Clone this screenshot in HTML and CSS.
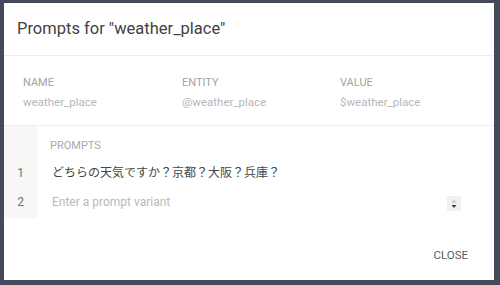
FILE: index.html
```html
<!DOCTYPE html>
<html lang="ja">
<head>
<meta charset="utf-8">
<link rel="stylesheet" href="styles.css">
</head>
<body>
<div class="dialog">
  <div class="header">Prompts for "weather_place"</div>
  <div class="info">
    <div class="col">
      <div class="label">Name</div>
      <div class="value">weather_place</div>
    </div>
    <div class="col">
      <div class="label">Entity</div>
      <div class="value">@weather_place</div>
    </div>
    <div class="col">
      <div class="label">Value</div>
      <div class="value">$weather_place</div>
    </div>
  </div>
  <div class="prompts">
    <div class="row head">
      <div class="num"></div>
      <div class="cell"><span class="plabel">Prompts</span></div>
    </div>
    <div class="row first">
      <div class="num">1</div>
      <div class="cell"><span class="text">どちらの天気ですか？京都？大阪？兵庫？</span></div>
    </div>
    <div class="row last">
      <div class="num">2</div>
      <div class="cell">
        <span class="text placeholder">Enter a prompt variant</span>
        <span class="spinner">
          <svg width="14" height="15" viewBox="0 0 14 15">
            <rect width="14" height="15" fill="#f1f1f1"/>
            <path d="M4.5 6.5 L7 3.5 L9.5 6.5 Z" fill="#c4c4c4"/>
            <path d="M4.5 9 L7 12 L9.5 9 Z" fill="#3a3a3a"/>
          </svg>
        </span>
      </div>
    </div>
  </div>
  <div class="footer">
    <span class="close">Close</span>
  </div>
</div>
</body>
</html>
```
FILE: styles.css
```css
html, body {
  margin: 0;
  padding: 0;
}
body {
  background: #454a5b;
  width: 500px;
  height: 285px;
  overflow: hidden;
  font-family: Roboto, "Noto Sans CJK JP", sans-serif;
}
.dialog {
  margin: 3px 0 0 4px;
  width: 490px;
  height: 277px;
  background: #ffffff;
  display: flex;
  flex-direction: column;
}
.header {
  height: 38px;
  padding: 14px 0 0 13px;
  font-size: 16.5px;
  line-height: 24px;
  color: #424242;
  border-bottom: 1px solid #ececec;
}
.info {
  display: grid;
  grid-template-columns: 159px 158px 1fr;
  padding: 19px 0 15px 19px;
  border-bottom: 1px solid #ececec;
}
.label {
  font-size: 11px;
  line-height: 16px;
  text-transform: uppercase;
  color: #a2a2a6;
}
.value {
  margin-top: 3px;
  font-size: 11.5px;
  line-height: 16px;
  color: #b7b7bb;
}
.prompts {
  display: flex;
  flex-direction: column;
}
.row {
  display: flex;
  height: 28px;
}
.row.head {
  height: 33px;
}
.row.first {
  height: 29px;
}
.row.last {
  height: 30px;
}
.num {
  width: 33px;
  flex: none;
  background: #f7f7f7;
  text-align: center;
  font-size: 12px;
  line-height: 28px;
  color: #707070;
}
.cell {
  flex: 1;
  display: flex;
  align-items: flex-start;
  padding-left: 13px;
  padding-right: 33px;
}
.plabel {
  margin-top: 12px;
  font-size: 11px;
  line-height: 16px;
  text-transform: uppercase;
  color: #a6a8ba;
}
.text {
  flex: 1;
  padding-left: 2px;
  font-size: 12px;
  line-height: 28px;
  color: #454545;
}
.placeholder {
  color: #b9b9b9;
}
.spinner {
  display: block;
  margin-top: 8px;
  width: 14px;
  height: 15px;
}
.spinner svg {
  display: block;
}
.footer {
  flex: 1;
  display: flex;
  justify-content: flex-end;
  align-items: flex-start;
  padding-right: 26px;
}
.close {
  margin-top: 29px;
  font-size: 11.5px;
  line-height: 16px;
  font-weight: 400;
  text-transform: uppercase;
  color: #5c5c5c;
}
```
